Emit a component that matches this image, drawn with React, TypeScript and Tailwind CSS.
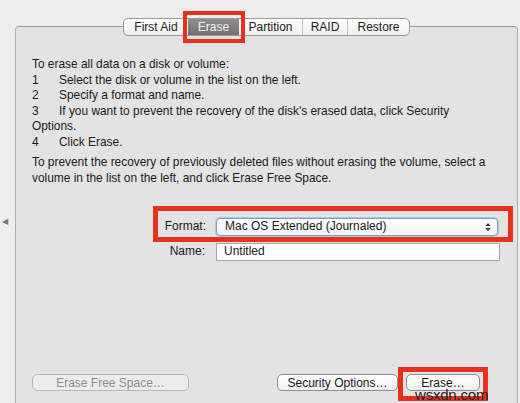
import React from 'react';

const tabs = [
    { label: 'First Aid', w: 'w-[64px]' },
    { label: 'Erase', w: 'w-[51px]' },
    { label: 'Partition', w: 'w-[63px]' },
    { label: 'RAID', w: 'w-[45px]' },
    { label: 'Restore', w: 'w-[62px]' },
];

const steps = [
    { n: '1', text: 'Select the disk or volume in the list on the left.' },
    { n: '2', text: 'Specify a format and name.' },
    { n: '3', text: "If you want to prevent the recovery of the disk's erased data, click Security" },
];

const RedBox: React.FC<{ className: string }> = ({ className }) => (
    <div className={`absolute border-[#e6321c] pointer-events-none ${className}`} />
);

const MacButton: React.FC<{ label: string; disabled?: boolean; className?: string }> = ({ label, disabled, className }) => (
    <div
        className={`h-[17px] flex items-center justify-center rounded-[5px] border text-[12px] leading-none ${
            disabled
                ? 'border-[#b9b9b9] bg-[#ececec] text-[#8d8d8d]'
                : 'border-[#8e8e8e] bg-gradient-to-b from-white to-[#f0f0f0] text-[#1a1a1a]'
        } ${className ?? ''}`}
    >
        {label}
    </div>
);

const App: React.FC = () => {
    return (
        <div
            className="relative w-[520px] h-[403px] overflow-hidden bg-[#ededed] pt-[18px]"
            style={{ fontFamily: '"Liberation Sans", Arial, sans-serif' }}
        >
            {/* little splitter mark at the left edge */}
            <div className="absolute left-[2px] top-[216px] text-[8px] text-[#777]">&#9664;</div>

            {/* tab bar */}
            <div className="relative z-10 flex justify-center pl-[15px] pr-[2px]">
                <div className="flex h-[18px] rounded-[5px] border border-[#9a9a9a] bg-gradient-to-b from-white to-[#efefef] text-[12px] text-[#1c1c1c]">
                    {tabs.map((t, i) => (
                        <div
                            key={t.label}
                            className={`relative flex items-center justify-center ${t.w} ${
                                t.label === 'Erase'
                                    ? 'bg-gradient-to-b from-[#8f8f8f] to-[#707070] text-[#f2f2f2]'
                                    : ''
                            } ${i > 1 && t.label !== 'Erase' && tabs[i - 1].label !== 'Erase' ? 'border-l border-[#c4c4c4]' : ''}`}
                        >
                            {t.label}
                            {t.label === 'Erase' && (
                                <RedBox className="border-[4px] -left-[5px] -right-[6px] -top-[8px] -bottom-[8px]" />
                            )}
                        </div>
                    ))}
                </div>
            </div>

            {/* panel */}
            <div className="relative -mt-[10px] ml-[15px] w-[503px] h-[400px] rounded-t-[4px] border border-[#b0b0b0] border-t-[#9c9c9c] bg-[#e3e3e3] pt-[30px] pl-[16px] pr-[12px] pb-[34px] flex flex-col text-[11.9px] text-[#1a1a1a] leading-[15.6px]">
                <p>To erase all data on a disk or volume:</p>
                {steps.map((s) => (
                    <div key={s.n} className="flex">
                        <span className="w-[27px]">{s.n}</span>
                        <span>{s.text}</span>
                    </div>
                ))}
                <p>Options.</p>
                <div className="flex">
                    <span className="w-[27px]">4</span>
                    <span>Click Erase.</span>
                </div>
                <p className="mt-[4.5px]">
                    To prevent the recovery of previously deleted files without erasing the volume, select a
                    <br />
                    volume in the list on the left, and click Erase Free Space.
                </p>

                {/* format + name */}
                <div className="mt-[32px] flex flex-col gap-[7px] text-[12px]">
                    <div className="relative flex items-center">
                        <span className="w-[184px] text-right pr-[10px]">Format:</span>
                        <div className="flex-1 mr-[7px] h-[18px] flex items-center justify-between rounded-[4px] border border-[#7f9ec6] bg-gradient-to-b from-white to-[#eef2f7] pl-[8px] pr-[6px] shadow-[0_0_0_1px_rgba(120,160,210,0.45)]">
                            <span>Mac OS Extended (Journaled)</span>
                            <svg width="6" height="10" viewBox="0 0 6 10">
                                <path d="M0.5 4 L3 1 L5.5 4 Z" fill="#333" />
                                <path d="M0.5 6 L3 9 L5.5 6 Z" fill="#333" />
                            </svg>
                        </div>
                        <RedBox className="border-[5px] left-[121px] -right-[8px] -top-[12px] -bottom-[6px]" />
                    </div>
                    <div className="flex items-center">
                        <span className="w-[184px] text-right pr-[11px]">Name:</span>
                        <div className="flex-1 mr-[5px] h-[18px] flex items-center border border-[#a5a5a5] bg-white pl-[7px]">
                            Untitled
                        </div>
                    </div>
                </div>

                {/* bottom buttons */}
                <div className="mt-auto flex items-center">
                    <MacButton label="Erase Free Space…" disabled className="w-[157px]" />
                    <MacButton label="Security Options…" className="ml-[88px] w-[121px]" />
                    <div className="relative ml-[8px]">
                        <MacButton label="Erase…" className="w-[74px]" />
                        <RedBox className="border-[5px] -left-[8px] -right-[8px] -top-[7px] -bottom-[10px]" />
                    </div>
                </div>
            </div>

            {/* watermark */}
            <div className="absolute left-[415px] top-[384px] text-[15px] text-[#222] tracking-[-0.2px]">wsxdn.com</div>
        </div>
    );
};

export default App;
